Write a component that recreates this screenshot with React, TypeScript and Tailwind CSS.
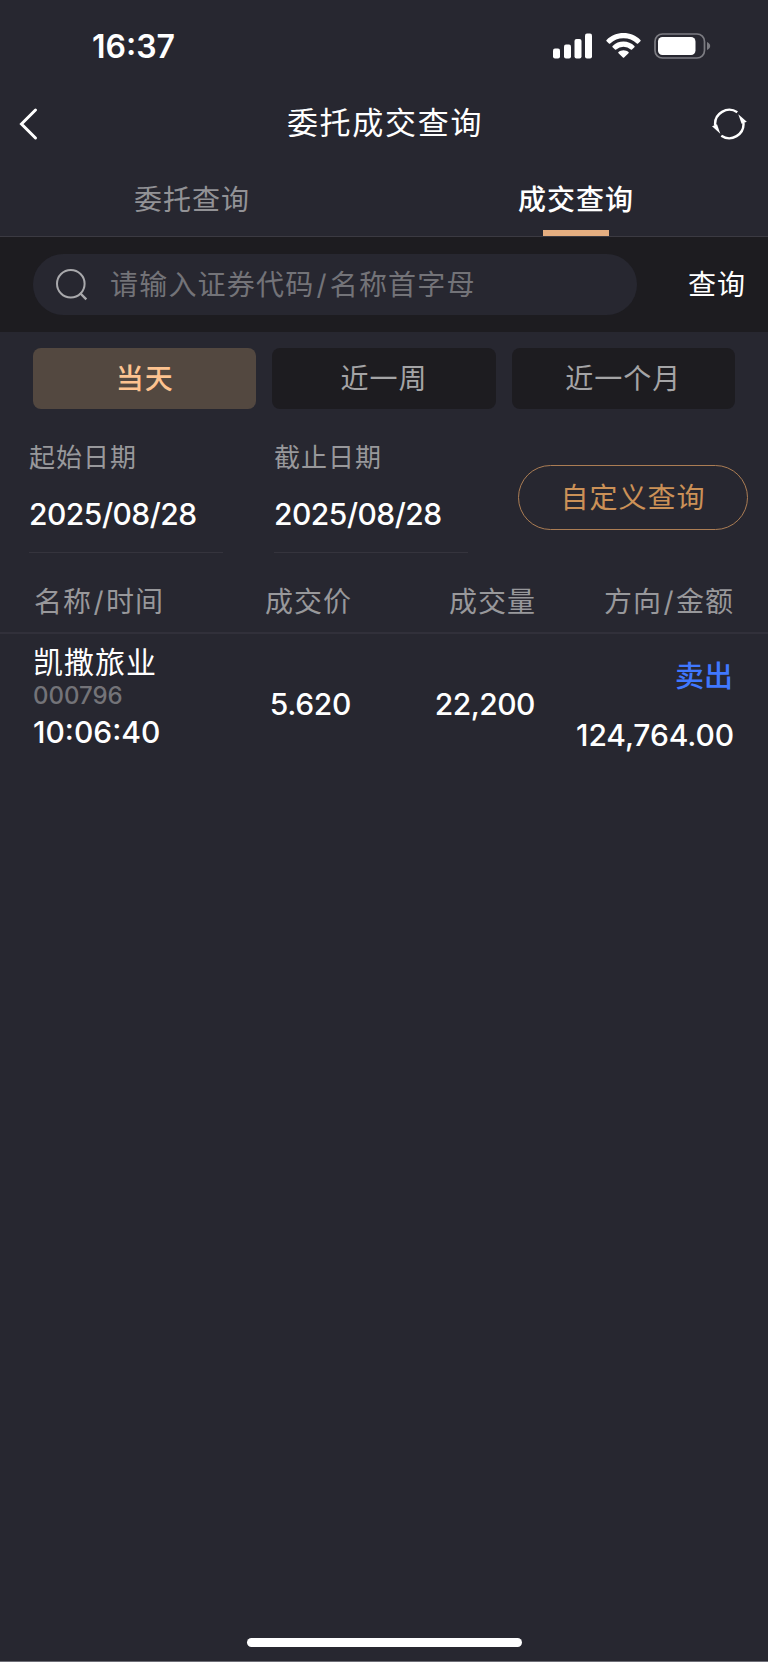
import { clsx } from 'clsx';

const tabs = ['委托查询', '成交查询'];
const ranges = ['当天', '近一周', '近一个月'];

const dates = [
  { label: '起始日期', value: '2025/08/28' },
  { label: '截止日期', value: '2025/08/28' },
];

const deals = [
  {
    name: '凯撒旅业',
    code: '000796',
    time: '10:06:40',
    price: '5.620',
    volume: '22,200',
    side: '卖出',
    amount: '124,764.00',
  },
];

const StatusBar = () => (
  <div className="flex h-[88px] items-center justify-between pl-[92px] pr-[57px] pt-1">
    <span className="pt-px text-[32px] font-semibold leading-none">16:37</span>
    <div className="flex items-center">
      <svg width="40" height="26" viewBox="0 0 40 26" fill="#fff">
        <rect x="0" y="15.5" width="7" height="10" rx="2" />
        <rect x="11" y="11.5" width="7" height="14" rx="2" />
        <rect x="21.5" y="6" width="7" height="19.5" rx="2" />
        <rect x="32" y="0.5" width="7" height="25" rx="2" />
      </svg>
      <svg className="ml-[13px]" width="35" height="26" viewBox="0 0 35 26" fill="#fff">
        <path d="M17.5 0C24 0 30 2.6 34.4 6.9a.9.9 0 0 1 0 1.3l-2.3 2.3a.9.9 0 0 1-1.3 0A19 19 0 0 0 17.5 5.2 19 19 0 0 0 4.2 10.5a.9.9 0 0 1-1.3 0L.6 8.2a.9.9 0 0 1 0-1.3C5 2.6 11 0 17.5 0z" />
        <path d="M17.5 8.6c4.2 0 8 1.6 10.9 4.3a.9.9 0 0 1 0 1.3l-2.4 2.3a.9.9 0 0 1-1.2 0 10.8 10.8 0 0 0-14.6 0 .9.9 0 0 1-1.2 0l-2.4-2.3a.9.9 0 0 1 0-1.3 16 16 0 0 1 10.9-4.3z" />
        <path d="M17.5 17.3c1.9 0 3.7.7 5 1.8a.8.8 0 0 1 0 1.2l-4.4 4.3a.9.9 0 0 1-1.2 0l-4.4-4.3a.8.8 0 0 1 0-1.2c1.3-1.1 3.1-1.8 5-1.8z" />
      </svg>
      <svg className="ml-[13px]" width="57" height="26" viewBox="0 0 57 26" fill="none">
        <rect x="1" y="1" width="49.5" height="24" rx="7.5" stroke="#7c7c82" strokeWidth="1.7" />
        <rect x="4" y="4" width="37.5" height="18" rx="4.5" fill="#fff" />
        <path d="M53 9c2 .8 3.2 2.3 3.2 4s-1.2 3.2-3.2 4z" fill="#7c7c82" />
      </svg>
    </div>
  </div>
);

const Header = () => (
  <header className="flex h-[70px] items-center justify-between pl-[19px] pr-5">
    <svg className="mt-0.5" width="36" height="34" viewBox="0 0 36 34" fill="none" stroke="#fff" strokeWidth="3" strokeLinecap="round">
      <path d="M16.5 3 2.5 17 16.5 31" />
    </svg>
    <h1 className="-mt-0.5 pl-[3px] text-[31px] leading-none tracking-[1.7px]">委托成交查询</h1>
    <svg className="mt-px" width="36" height="34" viewBox="0 0 36 34" fill="none" stroke="#fff" strokeWidth="2.4">
      <path d="M25.3 5.3A14.2 14.2 0 0 0 3.2 18.5" />
      <path d="M9.3 28.7A14.2 14.2 0 0 0 31.4 15.5" />
      <path d="M26.3 7.3 34.8 14.7 29.6 16.8z" fill="#fff" stroke="none" />
      <path d="M8.3 26.7 0 19.3 5 17.2z" fill="#fff" stroke="none" />
    </svg>
  </header>
);

const SearchBar = () => (
  <div className="flex h-[95px] items-center justify-between bg-[#1d1c20] pl-[33px] pr-[22px]">
    <div className="flex h-[61px] w-[604px] items-center rounded-full bg-[#272730] pl-[23px]">
      <svg width="32" height="32" viewBox="0 0 32 32" fill="none" stroke="#a9a9ac" strokeWidth="2">
        <circle cx="14.8" cy="14.8" r="13.8" />
        <path d="m24 24 6.3 6.3" strokeWidth="2.4" />
      </svg>
      <span className="ml-[22px] text-[28px] leading-none tracking-[1.2px] text-[#737378]">
        请输入证券代码<span className="px-0.5">/</span>名称首字母
      </span>
    </div>
    <button className="text-[28px] leading-none tracking-[1px]">查询</button>
  </div>
);

export default function App() {
  const activeTab = 1;
  const activeRange = 0;

  return (
    <div className="flex h-[1662px] w-[768px] flex-col border-b border-[#6d6d76] bg-[#272730] font-[Inter,'Noto_Sans_CJK_SC',sans-serif] text-white">
      <StatusBar />
      <Header />

      <nav className="flex h-[79px] border-b border-[#3b3a42]">
        {tabs.map((tab, i) => (
          <div
            key={tab}
            className={clsx(
              'flex flex-1 flex-col items-center justify-between pt-7 text-[28px] leading-none tracking-[1px]',
              i === activeTab ? 'font-medium' : 'text-[#929296]'
            )}
          >
            {tab}
            {i === activeTab && <div className="h-1.5 w-[66px] bg-[#e5ae80]" />}
          </div>
        ))}
      </nav>

      <SearchBar />

      <div className="mt-4 grid grid-cols-3 gap-4 px-[33px]">
        {ranges.map((range, i) => (
          <button
            key={range}
            className={clsx(
              'h-[61px] rounded-lg text-[28px] leading-none tracking-[1px]',
              i === activeRange ? 'bg-[#534840] font-medium text-[#fdc390]' : 'bg-[#1d1c20] text-[#a4a4a6]'
            )}
          >
            {range}
          </button>
        ))}
      </div>

      <div className="flex pl-[29px] pt-[34px]">
        {dates.map((date) => (
          <div key={date.label} className="mr-[51px] h-[110px] w-[194px] border-b border-[#35343d]">
            <div className="pt-px text-[26px] leading-[28px] tracking-[1px] text-[#98989b]">{date.label}</div>
            <div className="mt-[27px] text-[30px] font-medium leading-[30px] tracking-[-0.5px]">{date.value}</div>
          </div>
        ))}
        <button className="-ml-px mt-[22px] h-[65px] w-[230px] rounded-full border border-[#ab7d54] text-[28px] leading-none tracking-[1px] text-[#cb9157]">
          自定义查询
        </button>
      </div>

      <div className="grid h-[81px] grid-cols-[168px_150px_184px_198px] items-center border-b-2 border-[#31303a] px-[34px] pt-[18px] text-right text-[28px] leading-none tracking-[1px] text-[#98989b]">
        <span className="text-left">名称<span className="px-[1.5px]">/</span>时间</span>
        <span>成交价</span>
        <span>成交量</span>
        <span>方向<span className="px-[1.5px]">/</span>金额</span>
      </div>

      {deals.map((deal) => (
        <div key={deal.time} className="grid h-[140px] grid-cols-[168px_150px_184px_198px] items-center px-[33px] text-right text-[30px] font-medium leading-none">
          <div className="-mt-3.5 flex flex-col text-left">
            <span className="font-normal tracking-[1px]">{deal.name}</span>
            <span className="mt-[7px] text-2xl leading-none text-[#737378]">{deal.code}</span>
            <span className="mt-[9px]">{deal.time}</span>
          </div>
          <span className="tracking-[-0.3px]">{deal.price}</span>
          <span className="tracking-[-0.5px]">{deal.volume}</span>
          <div className="mt-1 flex flex-col">
            <span className="text-[29px] leading-[30px] text-[#4078ff]">{deal.side}</span>
            <span className="-mr-px mt-7 tracking-[-0.1px]">{deal.amount}</span>
          </div>
        </div>
      ))}

      <div className="mx-auto mb-[14px] mt-auto h-[9px] w-[275px] rounded-full bg-white" />
    </div>
  );
}
